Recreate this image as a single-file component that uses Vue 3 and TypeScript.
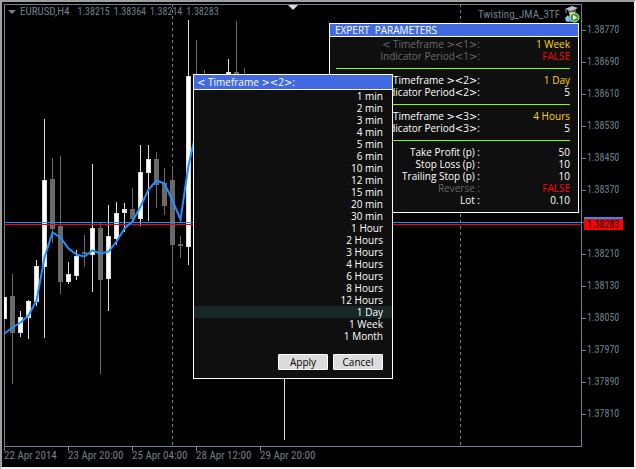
<script setup lang="ts">
import { ref } from 'vue'

interface Candle { x: number; up: boolean; high: number; low: number; top: number; bottom: number }
interface ParamRow { label?: string; value?: string; tone?: 'gold' | 'red' | 'white'; muted?: boolean }

const origin = 4
const step = 8

// slot, direction, high, low, body top, body bottom
const rawCandles: [number, 0 | 1, number, number, number, number][] = [
  [0, 1, 297, 318, 297, 318],
  [1, 0, 274, 383, 296, 332],
  [2, 1, 311, 336, 317, 332],
  [3, 1, 300, 338, 301, 317],
  [4, 1, 260, 305, 266, 301],
  [5, 1, 119, 337, 180, 266],
  [6, 0, 158, 242, 179, 228],
  [7, 0, 156, 293, 226, 281],
  [8, 1, 262, 283, 274, 281],
  [9, 1, 250, 279, 256, 275],
  [10, 0, 235, 266, 252, 253],
  [11, 1, 164, 291, 228, 254],
  [12, 0, 223, 373, 228, 279],
  [13, 1, 205, 310, 236, 278],
  [14, 1, 202, 244, 213, 238],
  [15, 1, 203, 231, 209, 212],
  [16, 0, 188, 222, 209, 218],
  [17, 1, 145, 225, 172, 218],
  [18, 1, 145, 220, 159, 172],
  [19, 0, 152, 207, 159, 184],
  [20, 0, 168, 214, 183, 205],
  [21, 0, 167, 281, 180, 244],
  [22, 0, 236, 257, 244, 245],
  [23, 1, 20, 264, 76, 246],
  [24, 0, 40, 180, 110, 160],
  [25, 0, 70, 180, 90, 150],
  [28, 1, 59, 160, 72, 140],
  [29, 0, 21, 160, 72, 140],
  [30, 0, 68, 160, 90, 140],
  [35, 1, 300, 439, 310, 360],
]

const candles: Candle[] = rawCandles.map(([slot, up, high, low, top, bottom]) => ({
  x: slot * step,
  up: up === 1,
  high: high - origin,
  low: low - origin,
  top: top - origin,
  bottom: bottom - origin,
}))

const average = [
  333, 327, 322, 315, 300, 257, 232, 237, 248, 254, 256, 250, 253, 251, 241, 228,
  221, 206, 189, 180, 183, 200, 219, 165, 130,
].map((y, i) => `${i * step + 0.5},${y - origin + 0.5}`).join(' ')

const quotes = ['1.38215', '1.38364', '1.38214', '1.38283']
const prices = [
  '1.38770', '1.38690', '1.38610', '1.38530', '1.38450', '1.38370', '',
  '1.38210', '1.38130', '1.38050', '1.37970', '1.37890', '1.37810',
]
const times = ['22 Apr 2014', '23 Apr 20:00', '25 Apr 04:00', '28 Apr 12:00', '29 Apr 20:00']

const params: ParamRow[] = [
  { label: '< Timeframe ><1>:', value: '1 Week', tone: 'gold', muted: true },
  { label: 'Indicator Period<1>:', value: 'FALSE', tone: 'red', muted: true },
  {},
  { label: '< Timeframe ><2>:', value: '1 Day', tone: 'gold' },
  { label: 'Indicator Period<2>:', value: '5', tone: 'white' },
  {},
  { label: '< Timeframe ><3>:', value: '4 Hours', tone: 'gold' },
  { label: 'Indicator Period<3>:', value: '5', tone: 'white' },
  {},
  { label: 'Take Profit (p) :', value: '50', tone: 'white' },
  { label: 'Stop Loss (p) :', value: '10', tone: 'white' },
  { label: 'Trailing Stop (p) :', value: '10', tone: 'white' },
  { label: 'Reverse :', value: 'FALSE', tone: 'red', muted: true },
  { label: 'Lot :', value: '0.10', tone: 'white' },
]

const timeframes = [
  '1 min', '2 min', '3 min', '4 min', '5 min', '6 min', '10 min', '12 min', '15 min', '20 min', '30 min',
  '1 Hour', '2 Hours', '3 Hours', '4 Hours', '6 Hours', '8 Hours', '12 Hours',
  '1 Day', '1 Week', '1 Month',
]
const selected = ref('1 Day')
const pickerTitle = '< Timeframe ><2>:'

// Brackets are set in a wider face than the words around them.
const pieces = (text: string): string[] => text.split(/([<>])/).filter(Boolean)
const isBracket = (text: string): boolean => text === '<' || text === '>'
</script>

<template>
  <main class="window">
    <section class="plot">
      <svg class="chart" aria-hidden="true">
        <g class="guides">
          <line x1="168.5" y1="0" x2="168.5" y2="100%" />
          <line x1="456.5" y1="0" x2="456.5" y2="100%" />
        </g>
        <g shape-rendering="crispEdges">
          <g v-for="c in candles" :key="c.x" :class="c.up ? 'up' : 'down'">
            <rect class="edge" :x="c.x" :y="c.high" width="1" :height="c.low - c.high + 1" />
            <rect class="edge" :x="c.x - 2" :y="c.top" width="5" :height="c.bottom - c.top + 1" />
            <rect class="fill" :x="c.x - 1" :y="c.top + 1" width="3" :height="Math.max(c.bottom - c.top - 1, 0)" />
          </g>
          <rect class="ask" x="0" y="218" width="100%" height="1" />
          <rect class="bid" x="0" y="220" width="100%" height="1" />
        </g>
        <polyline class="average" :points="average" />
      </svg>

      <header class="quote">
        <svg class="arrow" width="8" height="4" viewBox="0 0 8 4" aria-hidden="true"><path d="M0 0h8L4 4z" /></svg>
        <span class="symbol">EURUSD,H4</span>
        <span v-for="q in quotes" :key="q" class="price">{{ q }}</span>
      </header>
      <svg class="shift" width="10" height="5" viewBox="0 0 10 5" aria-hidden="true"><path d="M0 0h10L5 5z" /></svg>

      <div class="advisor">
        <span>Twisting_JMA_3TF</span>
        <svg width="16" height="17" viewBox="0 0 16 17" aria-hidden="true">
          <path d="M2 16c0-5 2-7 5-7s5 2 5 7z" fill="#3c78b4" />
          <path d="M1 12l3-3 2 6H2z" fill="#8ec4ee" />
          <path d="M6 9h3l-1 5z" fill="#f4f4f4" />
          <path d="M5 5h6v3c-1 2-5 2-6 0z" fill="#d8b48a" />
          <path d="M4 4l8-1v3H4z" fill="#555c62" />
          <path d="M1 3l7-3 6 2-7 3z" fill="#b8c0c6" />
          <path d="M2 3v4" stroke="#8c949a" />
          <circle cx="10.500" cy="11.500" r="4.500" fill="#35a52c" stroke="#c9efc0" />
          <path d="M9 9l4 2.500L9 14z" fill="#fff" />
        </svg>
      </div>

      <section class="panel params">
        <h2>EXPERT&nbsp; PARAMETERS</h2>
        <table>
          <tbody>
            <tr v-for="(p, i) in params" :key="i" :class="{ muted: p.muted }">
              <template v-if="p.label">
                <th scope="row"><span v-for="(s, k) in pieces(p.label)" :key="k" :class="{ bracket: isBracket(s) }">{{ s }}</span></th>
                <td :class="p.tone">{{ p.value }}</td>
              </template>
              <td v-else colspan="2"><hr /></td>
            </tr>
          </tbody>
        </table>
      </section>

      <form class="panel picker" @submit.prevent>
        <h2 id="picker-title"><span v-for="(s, k) in pieces(pickerTitle)" :key="k" :class="{ bracket: isBracket(s) }">{{ s }}</span></h2>
        <div class="options" role="radiogroup" aria-labelledby="picker-title">
          <label v-for="t in timeframes" :key="t" :class="{ chosen: t === selected }">
            <input v-model="selected" type="radio" name="timeframe" :value="t" />
            {{ t }}
          </label>
        </div>
        <div class="actions">
          <button type="submit">Apply</button>
          <button type="button">Cancel</button>
        </div>
      </form>
    </section>

    <aside class="prices price">
      <span v-for="(p, i) in prices" :key="i">{{ p }}</span>
      <strong class="last">1.38283</strong>
    </aside>

    <footer class="times">
      <span v-for="t in times" :key="t">{{ t }}</span>
    </footer>
  </main>
</template>

<style>
body {
  background: #000;
}
</style>

<style scoped>
.window {
  box-sizing: border-box;
  min-height: 100vh;
  display: grid;
  grid-template-columns: 1fr 52px;
  grid-template-rows: 1fr 20px;
  padding: 2px 0 0 2px;
  border: 2px solid;
  border-color: #a0a0a0 #f0f0f0 #f0f0f0 #a0a0a0;
  background: #000;
  color: #708090;
  font: 11px/14px "Roboto Condensed", "DejaVu Sans Condensed", sans-serif;
}
.price {
  font-size: 10px;
}
.plot {
  position: relative;
  min-height: 443px;
  outline: 1px solid #708090;
  outline-offset: -1px;
}
.chart {
  position: absolute;
  width: 100%;
  height: 100%;
}
.guides line {
  stroke: #708090;
  stroke-dasharray: 3 3;
}
.up .edge {
  fill: #dcdcdc;
}
.up .fill {
  fill: #fff;
}
.down rect {
  fill: #696969;
}
.ask {
  fill: #1e90ff;
}
.bid {
  fill: #f00;
}
.average {
  fill: none;
  stroke: #1e90ff;
  stroke-width: 2;
}
.quote {
  position: absolute;
  top: 1px;
  left: 4px;
  display: flex;
  align-items: center;
  gap: 4px;
}
.arrow {
  fill: #708090;
}
.symbol {
  margin-right: 4px;
}
.shift {
  position: absolute;
  top: 1px;
  left: 284px;
  fill: #dcdcdc;
}
.advisor {
  position: absolute;
  top: 2px;
  right: 2px;
  display: flex;
  align-items: center;
  gap: 4px;
}
.panel {
  position: absolute;
  box-sizing: border-box;
  border: 1px solid #fff;
  background: #0f0f0f;
  color: #fff;
  font: 10px/12px "Open Sans", sans-serif;
}
.panel h2 {
  margin: 0;
  border-bottom: 1px solid #fff;
  background: #4169e1;
  font: inherit;
  white-space: pre;
}
.bracket {
  font-family: "DejaVu Sans", sans-serif;
  line-height: 10px;
}
.params {
  top: 19px;
  right: 3px;
  width: 250px;
  height: 190px;
}
.params h2 {
  padding: 0 5px;
}
.params table {
  width: 100%;
  padding: 1px 8px 0 6px;
  border-spacing: 0;
}
.params th,
.params td {
  height: 12px;
  padding: 0;
  font-weight: 400;
  text-align: right;
  white-space: pre;
}
.params th {
  width: 144px;
}
.params hr {
  margin: 0;
  border: 0;
  border-top: 1px solid #7fff00;
}
.muted th {
  color: #696969;
}
.gold {
  color: #ffd700;
}
.red {
  color: #f00;
}
.picker {
  top: 70px;
  left: 189px;
  width: 200px;
  padding-bottom: 8px;
}
.picker h2 {
  padding: 1px 3px;
}
.options {
  display: flex;
  flex-direction: column;
}
.options label {
  position: relative;
  padding-right: 9px;
  text-align: right;
}
.options input {
  position: absolute;
  inset: 0;
  margin: 0;
  opacity: 0;
}
.chosen {
  background: #182828;
}
.actions {
  display: flex;
  justify-content: flex-end;
  gap: 5px;
  padding: 12px 9px 0 0;
}
.actions button {
  box-sizing: border-box;
  width: 50px;
  height: 16px;
  padding: 0;
  border: 1px solid #fff;
  border-radius: 1px;
  background: #dcdcdc;
  color: #000;
  font: inherit;
}
.prices {
  position: relative;
  display: flex;
  flex-direction: column;
  padding-top: 10px;
}
.prices span {
  display: flex;
  align-items: center;
  gap: 1px;
  height: 32px;
}
.prices span::before {
  content: "";
  width: 4px;
  height: 1px;
  background: #708090;
}
.last {
  position: absolute;
  top: 213px;
  left: 2px;
  width: 39px;
  box-sizing: border-box;
  padding-left: 3px;
  border-top: 2px solid #1e90ff;
  background: #f00;
  color: #000;
  font-weight: 400;
  line-height: 11px;
}
.times {
  grid-column: 1 / -1;
  display: flex;
}
.times span {
  position: relative;
  width: 64px;
  padding-top: 2px;
  white-space: nowrap;
}
.times span::before {
  content: "";
  position: absolute;
  top: 0;
  left: 0;
  width: 1px;
  height: 4px;
  background: #708090;
}
</style>
